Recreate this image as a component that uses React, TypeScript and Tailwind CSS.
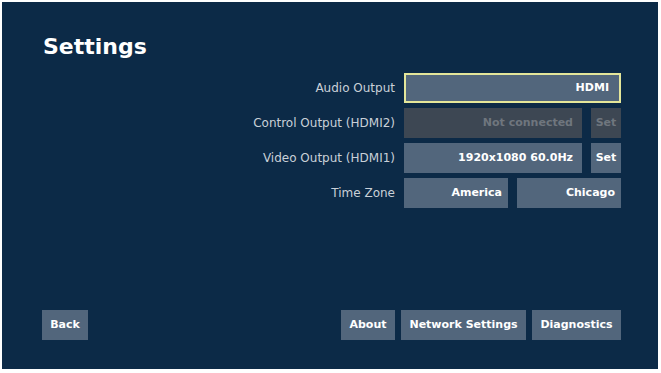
import React from "react";

const font = { fontFamily: '"DejaVu Sans", Verdana, sans-serif' };

function Box({
  children,
  className = "",
}: {
  children: React.ReactNode;
  className?: string;
}) {
  return (
    <div
      className={`h-[30px] flex items-center justify-end bg-[#52667c] text-white font-bold text-[11px] ${className}`}
    >
      {children}
    </div>
  );
}

function Label({ children }: { children: React.ReactNode }) {
  return (
    <div className="h-[30px] flex items-center justify-end text-[12px] text-[#c9d0d8]">
      {children}
    </div>
  );
}

function Btn({ children, w }: { children: React.ReactNode; w: string }) {
  return (
    <div
      className={`h-[30px] ${w} flex items-center justify-center bg-[#52667c] text-white font-bold text-[11px]`}
    >
      {children}
    </div>
  );
}

export default function App() {
  return (
    <div className="w-[661px] h-[373px] bg-white pt-[2px] pl-[2px]" style={font}>
      <div className="w-[656px] h-[367px] bg-[#0c2a47] flex flex-col pt-[32px] pl-[40px] pr-[37px] pb-[29px]">
        <div className="text-[22px] leading-[26px] font-bold text-white pl-[1px]">
          Settings
        </div>
        <div className="mt-[13px] grid grid-cols-[353px_217px] gap-x-[9px] gap-y-[5px]">
          <Label>Audio Output</Label>
          <div className="h-[30px] border-2 border-[#e4e69a] bg-[#52667c] flex items-center justify-end pr-[10px] text-white font-bold text-[11px]">
            HDMI
          </div>

          <Label>Control Output (HDMI2)</Label>
          <div className="flex gap-[9px]">
            <div className="h-[30px] flex-1 flex items-center justify-end pr-[9px] bg-[#3d4753] text-[#6f767e] font-bold text-[11px]">
              Not connected
            </div>
            <div className="h-[30px] w-[30px] flex items-center justify-center bg-[#3d4753] text-[#6f767e] font-bold text-[11px]">
              Set
            </div>
          </div>

          <Label>Video Output (HDMI1)</Label>
          <div className="flex gap-[9px]">
            <Box className="flex-1 pr-[9px]">1920x1080 60.0Hz</Box>
            <Box className="w-[30px] !justify-center">Set</Box>
          </div>

          <Label>Time Zone</Label>
          <div className="grid grid-cols-2 gap-[9px]">
            <Box className="pr-[6px]">America</Box>
            <Box className="pr-[6px]">Chicago</Box>
          </div>
        </div>

        <div className="mt-auto flex items-center">
          <Btn w="w-[46px]">Back</Btn>
          <div className="flex-1" />
          <div className="flex gap-[6px]">
            <Btn w="w-[54px]">About</Btn>
            <Btn w="w-[125px]">Network Settings</Btn>
            <Btn w="w-[89px]">Diagnostics</Btn>
          </div>
        </div>
      </div>
    </div>
  );
}
